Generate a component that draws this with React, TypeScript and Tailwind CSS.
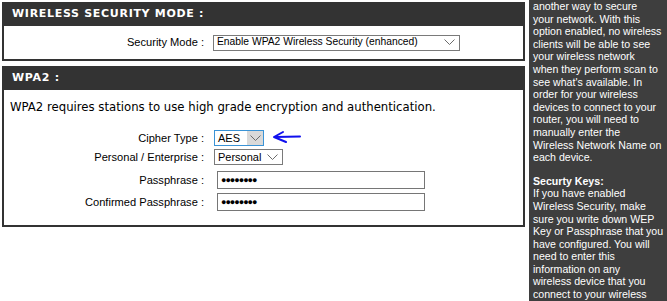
import React from "react";

const body = { fontFamily: "'Liberation Sans', Arial, sans-serif" } as const;
const head = { fontFamily: "'DejaVu Sans', Verdana, sans-serif" } as const;

function Chevron() {
  return (
    <svg width="11" height="7" viewBox="0 0 11 7" className="shrink-0">
      <path d="M0.5 0.5 L5.5 5.5 L10.5 0.5" fill="none" stroke="#6b6b6b" strokeWidth="1" />
    </svg>
  );
}

function Label({ children }: { children: React.ReactNode }) {
  return <div className="w-[200px] text-right whitespace-nowrap text-[11.1px]">{children}</div>;
}

const sideLines1 = [
  "another way to secure",
  "your network. With this",
  "option enabled, no wireless",
  "clients will be able to see",
  "your wireless network",
  "when they perform scan to",
  "see what's available. In",
  "order for your wireless",
  "devices to connect to your",
  "router, you will need to",
  "manually enter the",
  "Wireless Network Name on",
  "each device.",
];
const sideLines2 = [
  "If you have enabled",
  "Wireless Security, make",
  "sure you write down WEP",
  "Key or Passphrase that you",
  "have configured. You will",
  "need to enter this",
  "information on any",
  "wireless device that you",
  "connect to your wireless",
];

export default function App() {
  return (
    <div className="w-[667px] h-[301px] overflow-hidden bg-white flex text-black" style={body}>
      <div className="w-[523px] ml-[2px] mt-[2px] flex flex-col shrink-0">
        {/* Wireless Security Mode */}
        <div className="h-[24px] bg-[#333333] flex items-center pl-[10px]">
          <span className="text-white font-bold text-[11px] tracking-[0.7px]" style={head}>
            WIRELESS SECURITY MODE :
          </span>
        </div>
        <div className="h-[35px] border-2 border-t-0 border-[#333333] flex items-center">
          <Label>Security Mode :</Label>
          <div className="ml-[9px] w-[247px] h-[16px] border border-[#7a7a7a] flex items-center justify-between pl-[3px] pr-[4px]">
            <span className="text-[10.3px] leading-none whitespace-nowrap">Enable WPA2 Wireless Security (enhanced)</span>
            <Chevron />
          </div>
        </div>

        {/* WPA2 */}
        <div className="h-[24px] bg-[#333333] flex items-center pl-[10px] mt-[5px]">
          <span className="text-white font-bold text-[11px] tracking-[0.7px]" style={head}>
            WPA2 :
          </span>
        </div>
        <div className="h-[137px] border-2 border-t-0 border-[#333333] flex flex-col">
          <div className="pl-[6px] mt-[10px] h-[14px] leading-[14px] text-[11.7px] whitespace-nowrap" style={head}>
            WPA2 requires stations to use high grade encryption and authentication.
          </div>
          <div className="flex items-center mt-[16px] h-[16px]">
            <Label>Cipher Type :</Label>
            <div className="ml-[10px] w-[50px] h-[16px] border border-[#3a93d6] flex items-stretch">
              <span className="flex-1 pl-[3px] leading-[14px] text-[11px]">AES</span>
              <div className="w-[16px] bg-[#d9d9d9] flex items-center justify-center">
                <Chevron />
              </div>
            </div>
            <svg width="34" height="16" viewBox="0 0 34 16" className="ml-[8px]">
              <path d="M3 7 L28 6.5" fill="none" stroke="#1010ee" strokeWidth="2" strokeLinecap="round" />
              <path d="M11 2 L2 7 L14 12" fill="none" stroke="#1010ee" strokeWidth="2" strokeLinecap="round" strokeLinejoin="round" />
            </svg>
          </div>
          <div className="flex items-center mt-[3px] h-[16px]">
            <Label>Personal / Enterprise :</Label>
            <div className="ml-[10px] w-[69px] h-[16px] border border-[#7a7a7a] flex items-center justify-between pl-[3px] pr-[4px]">
              <span className="text-[11px] leading-none">Personal</span>
              <Chevron />
            </div>
          </div>
          <div className="flex items-center mt-[6px] h-[18px]">
            <Label>Passphrase :</Label>
            <div className="ml-[13px] w-[208px] h-[18px] border border-[#767676] flex items-center pl-[3px] text-[9px] tracking-[-1px] leading-none">
              ●●●●●●●●
            </div>
          </div>
          <div className="flex items-center mt-[4px] h-[18px]">
            <Label>Confirmed Passphrase :</Label>
            <div className="ml-[13px] w-[208px] h-[18px] border border-[#767676] flex items-center pl-[3px] text-[9px] tracking-[-1px] leading-none">
              ●●●●●●●●
            </div>
          </div>
        </div>
      </div>

      {/* Sidebar */}
      <div className="ml-[4px] flex-1 bg-[#3e3e3e] text-white text-[10.6px] leading-[12.6px] pl-[4px]">
        {sideLines1.map((l) => (
          <div key={l} className="whitespace-nowrap">{l}</div>
        ))}
        <div className="whitespace-nowrap font-bold mt-[11px]">Securty Keys:</div>
        {sideLines2.map((l) => (
          <div key={l} className="whitespace-nowrap">{l}</div>
        ))}
      </div>
    </div>
  );
}
